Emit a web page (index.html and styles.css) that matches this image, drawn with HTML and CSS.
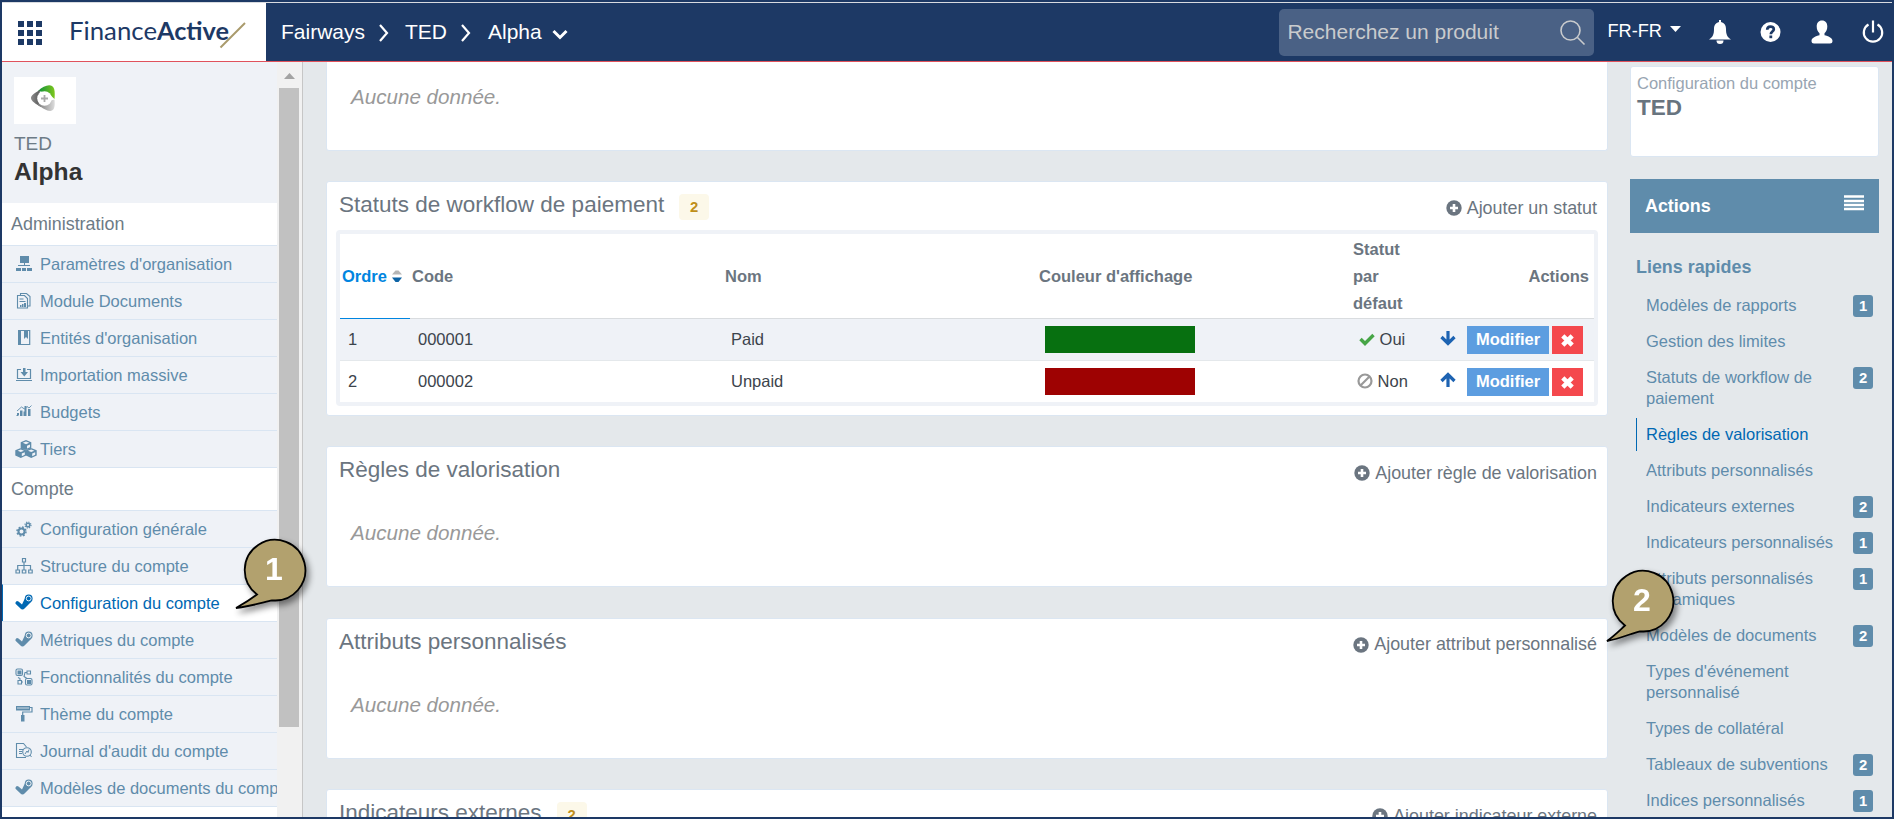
FILE: index.html
```
<!DOCTYPE html>
<html lang="fr">
<head>
    <meta charset="UTF-8">
    <meta name="viewport" content="width=device-width, initial-scale=1.0">
    <title>Configuration du compte</title>
    <link rel="stylesheet" href="styles.css">
</head>
<body>
    <svg class="sprite">
        <symbol id="i-org" viewBox="0 0 18 18"><path d="M5 1h9v7H5zM9 8h1v2h5v1H3v-1h6zM1 13h5v3H1zM7 13h4v3H7zM12 13h5v3h-5z"/></symbol>
        <symbol id="i-doc" viewBox="0 0 18 18"><path d="M2.500 3.500h7l3 3v9.500h-10z M5.500 3V1.500h6l3.500 3V14h-2M4.500 7h4M4.500 9.500h6" fill="none" stroke="currentColor" stroke-width="1.100"/><path d="M5 13h1.500v2H5zM7 12h1.500v3H7zM9 11h2v4H9z"/></symbol>
        <symbol id="i-book" viewBox="0 0 18 18"><path d="M3.700 1.500h11v14h-11z" fill="none" stroke="currentColor" stroke-width="1.200"/><path d="M3 1h3v15H3zM9 2h4v8l-2-2-2 2z"/></symbol>
        <symbol id="i-import" viewBox="0 0 18 18"><path d="M6 3.500H2.500v9h13v-9H12M1 14.500h16" fill="none" stroke="currentColor" stroke-width="1.200"/><path d="M8 2h2.500v4H13l-3.700 4.500L5.500 6H8z"/></symbol>
        <symbol id="i-chart" viewBox="0 0 18 18"><path d="M2 10h2v2H2zM5 7.500h2.500V13H5zM8.500 8.500H11V13H8.500zM9.500 3h2v10h-2zM13 6h2.500v7H13zM1.500 12h2v1h-2z"/><path d="M2 8l4.500-4 3 2 2.500-2.500 2 1.500L16.500 2.500" fill="none" stroke="currentColor" stroke-width=".9"/></symbol>
        <symbol id="i-cubes" viewBox="0 0 22 18"><path d="M11 0l5.300 2.300v5.700L11 10 5.700 8V2.300zM5.800 8l5.300 2.200V15.500l-5.300 2.500L.3 15.500v-5.300zM16.200 8l5.500 2.200v5.300L16.200 18 11 15.500v-5.300z"/><path d="M11 1.500l3.300 1.300L11 4.200 7.700 2.800zM12 5.800l3-1.300v2.700l-3 1.200zM5.800 9.500l3.200 1.300-3.200 1.300-3.200-1.300zM6.800 13.500l3-1.300v2.600l-3 1.400zM16.200 9.500l3.200 1.300-3.200 1.300-3.200-1.300zM17.200 13.500l3-1.300v2.600l-3 1.400z" fill="#eff2f7"/></symbol>
        <symbol id="i-gears" viewBox="0 0 18 18"><circle cx="6.500" cy="11.500" r="3" fill="none" stroke="currentColor" stroke-width="2"/><circle cx="6.500" cy="11.500" r="4.500" fill="none" stroke="currentColor" stroke-width="1.500" stroke-dasharray="1.770"/><circle cx="13" cy="5" r="1.800" fill="none" stroke="currentColor" stroke-width="1.500"/><circle cx="13" cy="5" r="3" fill="none" stroke="currentColor" stroke-width="1.200" stroke-dasharray="1.180"/></symbol>
        <symbol id="i-tree" viewBox="0 0 18 18"><path d="M7.500 1.500h3v3.500h-3zM9 5v8M2.700 12.500V8.500h12.800v4M1 13h3.500v3H1zM7.300 13h3.500v3H7.300zM13.700 13h3.500v3h-3.500z" fill="none" stroke="currentColor" stroke-width="1.200"/></symbol>
        <symbol id="i-tool" viewBox="0 0 18 18"><path d="M.5 8.500a2 2 0 013-1l3.500 3L10.500 3l5.500 5-6.500 6.500a2.500 2.500 0 01-4 0L.5 9.700z"/><circle cx="13.700" cy="4.500" r="3.900"/><circle cx="13.700" cy="4.500" r="2.400" fill="none" stroke="#fff" stroke-width=".9"/></symbol>
        <symbol id="i-feat" viewBox="0 0 18 18"><rect x="1" y="1" width="6.500" height="6.500" rx="1.500" fill="none" stroke="currentColor" stroke-width="1.100"/><rect x="2.500" y="2.500" width="4" height="4"/><rect x="10.500" y="10.500" width="6.500" height="6.500" rx="1.500" fill="none" stroke="currentColor" stroke-width="1.100"/><rect x="12" y="12" width="4" height="4"/><path d="M12 3h3.500v3H12zM3 12.500h3.500v3.500H3zM12 4.500H10l-1 4 3 2M3 9.500l2 1v2M6.500 14H8" fill="none" stroke="currentColor" stroke-width="1.100"/></symbol>
        <symbol id="i-roller" viewBox="0 0 18 18"><path d="M1 1h14v4.500H1zM6 10h3.500v6.500H6z"/><path d="M15 2.500h2v4.500H7.700v3" fill="none" stroke="currentColor" stroke-width="1.200"/><path d="M2 3h12" stroke="#eff2f7" stroke-width=".8"/></symbol>
        <symbol id="i-audit" viewBox="0 0 18 18"><path d="M11 15.500H1.500v-14H8.500l3 3.500M4 7.500h4M4 9.500h3M4 11.500h3" fill="none" stroke="currentColor" stroke-width="1.100"/><circle cx="12" cy="10" r="4.300" fill="none" stroke="currentColor" stroke-width="1.100"/><path d="M10 12l2-3 1 1.500 1-3M15 13l1.500 2" fill="none" stroke="currentColor"/></symbol>
        <symbol id="i-plus" viewBox="0 0 16 16"><circle cx="8" cy="8" r="7.700"/><path d="M8 4v8M4 8h8" stroke="#fff" stroke-width="2.600"/></symbol>
        <symbol id="i-arrow" viewBox="0 0 16 16"><path d="M8 1v12M1.500 7L8 13.500 14.500 7" fill="none" stroke="currentColor" stroke-width="3.200"/></symbol>
        <symbol id="i-cross" viewBox="0 0 16 16"><path d="M3 3l10 10M13 3L3 13" stroke="currentColor" stroke-width="4.800"/></symbol>
        <symbol id="i-next" viewBox="0 0 10 18"><path d="M1 1l7 8-7 8" fill="none" stroke="currentColor" stroke-width="2.200"/></symbol>
        <symbol id="bubble-one" viewBox="0 0 84 84"><path d="M26 61.500A30.300 30.300 0 1141 67.300C33 69 20 73 5 75 13 70.500 20 66 26 61.500z" fill="#b2a16e" stroke="#000" stroke-width="1.800"/></symbol>
        <symbol id="bubble-two" viewBox="0 0 84 84"><path d="M26 61.500A30.300 30.300 0 1141 67.300C33 69 22 74.500 8 77 15 72 20 67 26 61.500z" fill="#b2a16e" stroke="#000" stroke-width="1.800"/></symbol>
    </svg>

    <div class="frame">
        <header class="topbar">
            <div class="brand">
                <svg class="apps" viewBox="0 0 24 24"><path d="M0 0h6v6H0zM9 0h6v6H9zM18 0h6v6h-6zM0 9h6v6H0zM9 9h6v6H9zM18 9h6v6h-6zM0 18h6v6H0zM9 18h6v6H9zM18 18h6v6h-6z"/></svg>
                <svg class="logo" viewBox="0 0 180 30">
                    <text x="0" y="20" textLength="88" lengthAdjust="spacingAndGlyphs">Finance</text>
                    <text x="88" y="20" class="logo-bold" textLength="72" lengthAdjust="spacingAndGlyphs">Active</text>
                    <path d="M151.500 27.500L176 3" stroke="#a99a6b" stroke-width="2"/>
                </svg>
            </div>
            <div class="crumbs">
                <span class="crumb-first">Fairways</span>
                <svg class="next"><use href="#i-next"/></svg>
                <span class="crumb-second">TED</span>
                <svg class="next"><use href="#i-next"/></svg>
                <span>Alpha</span>
                <svg class="down" viewBox="0 0 16 11"><path d="M1.500 2L8 8.500 14.500 2" fill="none" stroke="#fff" stroke-width="3"/></svg>
            </div>
            <div class="search">
                <span>Recherchez un produit</span>
                <svg viewBox="0 0 26 26"><circle cx="10.500" cy="10.500" r="9.500"/><path d="M17.500 17.500l7 7"/></svg>
            </div>
            <span class="lang">FR-FR</span>
            <svg class="caret" viewBox="0 0 11 6"><path d="M0 0h11L5.500 6z"/></svg>
            <div class="tools">
                <svg viewBox="0 0 24 24"><path d="M11 0h2v2c3.500.8 5 3.500 5 7 0 5 1 8 5 10.500H1C5 17 6 14 6 9c0-3.500 1.500-6.200 5-7z"/><path d="M8.500 20.500h7A3.500 3.500 0 018.500 20.500z"/></svg>
                <svg viewBox="0 0 24 24"><circle cx="11.500" cy="12" r="10"/><path d="M8.200 9.800c0-4.400 6.600-4.100 6.600-.6 0 2.300-3 2.300-3 5" fill="none" stroke="#1d3965" stroke-width="2.700"/><path d="M10.400 15.500h2.800v2.700h-2.800z" fill="#1d3965"/></svg>
                <svg viewBox="0 0 24 24"><path d="M12 .5c3.500 0 5.300 2.500 5.300 6 0 3-1.200 5.500-2.800 6.800v2c3.500.8 8 2.500 8 5.700 0 1.700-1 2.500-2.500 2.500H4c-1.500 0-2.500-.8-2.500-2.500 0-3.200 4.500-4.900 8-5.700v-2C7.900 12 6.700 9.500 6.700 6.500c0-3.500 1.800-6 5.300-6z"/></svg>
                <svg viewBox="0 0 24 24"><path d="M7.500 4.500a9.200 9.200 0 109 0M12 .5v12" fill="none" stroke="#fff" stroke-width="2.200"/></svg>
            </div>
        </header>

        <div class="page">
            <nav class="sidebar">
                <div class="account">
                    <div class="account-logo">
                        <svg viewBox="0 0 26 26">
                            <defs>
                                <linearGradient id="green"><stop offset="0" stop-color="#0c8f3c"/><stop offset="1" stop-color="#7ec71c"/></linearGradient>
                                <linearGradient id="grey"><stop offset="0" stop-color="#8a8a8a"/><stop offset="1" stop-color="#555"/></linearGradient>
                                <linearGradient id="silver"><stop offset="0" stop-color="#777"/><stop offset="1" stop-color="#ddd"/></linearGradient>
                            </defs>
                            <path d="M8 6C13 1 19-1 22 1c3 1.500 3 7 2.500 13L18 8z" fill="url(#green)"/>
                            <path d="M10 5C5 8 1 10 1 13s5 6 10 9l-2-9z" fill="url(#grey)"/>
                            <path d="M7 19c6 5 12 8 15 6.500 3-1 3-7 2.500-11z" fill="url(#silver)"/>
                            <circle cx="14.500" cy="13.500" r="7.300" fill="#fff"/>
                            <path d="M14.500 10v7M11 13.500h7" stroke="#aaa" stroke-width="1.800"/>
                        </svg>
                    </div>
                    <div class="account-group">TED</div>
                    <div class="account-name">Alpha</div>
                </div>
                <div class="nav-title">Administration</div>
                <a class="nav-item"><svg><use href="#i-org"/></svg>Paramètres d'organisation</a>
                <a class="nav-item"><svg><use href="#i-doc"/></svg>Module Documents</a>
                <a class="nav-item"><svg><use href="#i-book"/></svg>Entités d'organisation</a>
                <a class="nav-item"><svg><use href="#i-import"/></svg>Importation massive</a>
                <a class="nav-item"><svg><use href="#i-chart"/></svg>Budgets</a>
                <a class="nav-item"><svg class="wide"><use href="#i-cubes"/></svg>Tiers</a>
                <div class="nav-title nav-title-next">Compte</div>
                <a class="nav-item"><svg><use href="#i-gears"/></svg>Configuration générale</a>
                <a class="nav-item"><svg><use href="#i-tree"/></svg>Structure du compte</a>
                <a class="nav-item active"><svg><use href="#i-tool"/></svg>Configuration du compte</a>
                <a class="nav-item"><svg><use href="#i-tool"/></svg>Métriques du compte</a>
                <a class="nav-item"><svg><use href="#i-feat"/></svg>Fonctionnalités du compte</a>
                <a class="nav-item"><svg><use href="#i-roller"/></svg>Thème du compte</a>
                <a class="nav-item"><svg><use href="#i-audit"/></svg>Journal d'audit du compte</a>
                <a class="nav-item"><svg><use href="#i-tool"/></svg>Modèles de documents du compte</a>
                <div class="nav-title nav-title-next"></div>
            </nav>
            <div class="scrollbar">
                <svg viewBox="0 0 11 6"><path d="M0 6h11L5.500 0z"/></svg>
                <div class="thumb"></div>
            </div>

            <main class="content">
                <section class="card card-cut">
                    <p class="empty">Aucune donnée.</p>
                </section>
                <section class="card card-table">
                    <div class="card-head">
                        <h2>Statuts de workflow de paiement</h2><span class="count">2</span>
                        <a class="add"><svg><use href="#i-plus"/></svg>Ajouter un statut</a>
                    </div>
                    <div class="table-box">
                        <table>
                            <colgroup>
                                <col class="c-order"><col class="c-code"><col class="c-name"><col class="c-color"><col class="c-default"><col>
                            </colgroup>
                            <thead>
                                <tr>
                                    <th class="sorted">Ordre <svg viewBox="0 0 10 13"><path d="M0 4.500L3.500.500h3L10 4.500z" fill="#b5b5b5"/><path d="M0 7.500h10l-3.500 4.500h-3z" fill="#0d63a5"/></svg></th>
                                    <th>Code</th>
                                    <th>Nom</th>
                                    <th>Couleur d'affichage</th>
                                    <th>Statut par défaut</th>
                                    <th class="right">Actions</th>
                                </tr>
                            </thead>
                            <tbody>
                                <tr>
                                    <td>1</td>
                                    <td>000001</td>
                                    <td>Paid</td>
                                    <td><div class="swatch paid"></div></td>
                                    <td><svg class="state" viewBox="0 0 16 14"><path d="M1.500 7l4.500 4.500L14.500 3" fill="none" stroke="#46a546" stroke-width="3.400"/></svg> Oui</td>
                                    <td>
                                        <div class="actions">
                                            <svg class="move"><use href="#i-arrow"/></svg>
                                            <button class="btn edit">Modifier</button>
                                            <button class="btn delete"><svg><use href="#i-cross"/></svg></button>
                                        </div>
                                    </td>
                                </tr>
                                <tr>
                                    <td>2</td>
                                    <td>000002</td>
                                    <td>Unpaid</td>
                                    <td><div class="swatch unpaid"></div></td>
                                    <td class="off"><svg class="state" viewBox="0 0 16 16"><circle cx="8" cy="8" r="6.500" fill="none" stroke="#999" stroke-width="2.200"/><path d="M3.500 12.500l9-9" stroke="#999" stroke-width="2.200"/></svg> Non</td>
                                    <td>
                                        <div class="actions">
                                            <svg class="move up"><use href="#i-arrow"/></svg>
                                            <button class="btn edit">Modifier</button>
                                            <button class="btn delete"><svg><use href="#i-cross"/></svg></button>
                                        </div>
                                    </td>
                                </tr>
                            </tbody>
                        </table>
                    </div>
                </section>
                <section class="card">
                    <div class="card-head">
                        <h2>Règles de valorisation</h2>
                        <a class="add"><svg><use href="#i-plus"/></svg>Ajouter règle de valorisation</a>
                    </div>
                    <p class="empty">Aucune donnée.</p>
                </section>
                <section class="card">
                    <div class="card-head">
                        <h2>Attributs personnalisés</h2>
                        <a class="add"><svg><use href="#i-plus"/></svg>Ajouter attribut personnalisé</a>
                    </div>
                    <p class="empty">Aucune donnée.</p>
                </section>
                <section class="card">
                    <div class="card-head">
                        <h2>Indicateurs externes</h2><span class="count">2</span>
                        <a class="add"><svg><use href="#i-plus"/></svg>Ajouter indicateur externe</a>
                    </div>
                </section>
            </main>

            <aside class="aside">
                <div class="summary">
                    <div class="summary-label">Configuration du compte</div>
                    <div class="summary-name">TED</div>
                </div>
                <div class="actions-bar">
                    Actions
                    <svg viewBox="0 0 20 16"><path d="M0 1.500h20M0 6h20M0 10h20M0 14h20" stroke="#fff" stroke-width="2.400"/></svg>
                </div>
                <h3>Liens rapides</h3>
                <ul class="links">
                    <li><span>Modèles de rapports</span><b>1</b></li>
                    <li><span>Gestion des limites</span></li>
                    <li><span>Statuts de workflow de paiement</span><b>2</b></li>
                    <li class="current"><span>Règles de valorisation</span></li>
                    <li><span>Attributs personnalisés</span></li>
                    <li><span>Indicateurs externes</span><b>2</b></li>
                    <li><span>Indicateurs personnalisés</span><b>1</b></li>
                    <li><span>Attributs personnalisés dynamiques</span><b>1</b></li>
                    <li><span>Modèles de documents</span><b>2</b></li>
                    <li><span>Types d'événement personnalisé</span></li>
                    <li><span>Types de collatéral</span></li>
                    <li><span>Tableaux de subventions</span><b>2</b></li>
                    <li><span>Indices personnalisés</span><b>1</b></li>
                </ul>
            </aside>
        </div>

        <div class="callout step-one"><svg><use href="#bubble-one"/></svg><span>1</span></div>
        <div class="callout step-two"><svg><use href="#bubble-two"/></svg><span>2</span></div>
    </div>
</body>
</html>
```
FILE: styles.css
```
* {
    box-sizing: border-box;
}

body {
    margin: 0;
    font-family: "Liberation Sans", Arial, sans-serif;
    font-size: 16.5px;
    background-color: #e4e8eb;
}

svg {
    display: block;
    flex: none;
    fill: currentColor;
}

.sprite {
    display: none;
}

.frame {
    position: relative;
    display: flex;
    flex-direction: column;
    height: 819px;
    border: 2px solid #1d3965;
    overflow: hidden;
}

/* top bar */
.topbar {
    display: flex;
    align-items: center;
    flex: none;
    height: 60px;
    padding-right: 7px;
    background-color: #1d3965;
    border-top: 1px solid #d8dbe0;
    border-bottom: 1px solid #e0525c;
    color: #fff;
}

.brand {
    display: flex;
    align-items: center;
    gap: 27px;
    width: 264px;
    height: 58px;
    padding-left: 16px;
    background-color: #fff;
    color: #1d3965;
}

.apps {
    width: 24px;
    height: 24px;
    margin-top: 2px;
}

.logo {
    width: 180px;
    height: 30px;
    margin-top: 5px;
    overflow: visible;
    font-family: Lato, sans-serif;
    font-size: 25px;
}

.logo-bold {
    font-weight: bold;
}

.crumbs {
    display: flex;
    align-items: center;
    flex: 1;
    padding-left: 15px;
    font-size: 21px;
}

.crumbs span {
    margin-top: -1px;
}

.crumb-first {
    width: 98px;
}

.crumb-second {
    width: 41px;
    margin-left: 16px;
    margin-right: 15px;
}

.next {
    width: 10px;
    height: 18px;
    margin-top: 2px;
}

.next + span:not(.crumb-second) {
    margin-left: 17px;
}

.down {
    width: 16px;
    height: 11px;
    margin: 4px 0 0 10px;
}

.search {
    display: flex;
    align-items: center;
    justify-content: space-between;
    width: 315px;
    height: 47px;
    margin-top: 1px;
    padding: 0 8px;
    border-radius: 5px;
    background-color: #4a6185;
    color: #c9cbcd;
    font-size: 21px;
}

.search span {
    margin-top: -2px;
}

.search svg {
    width: 26px;
    height: 26px;
    margin-top: 1px;
    fill: none;
    stroke: #c9cbcd;
    stroke-width: 1.6;
}

.lang {
    margin: -1px 0 0 13px;
    font-size: 18.2px;
}

.caret {
    width: 11px;
    height: 6px;
    margin: -6px 0 0 8px;
}

.tools {
    display: flex;
    gap: 27px;
    margin-left: 27px;
}

.tools svg {
    width: 24px;
    height: 24px;
}

/* sidebar */
.page {
    display: flex;
    flex: 1;
    min-height: 0;
}

.sidebar {
    width: 275px;
    overflow: hidden;
    background-color: #eff2f7;
    color: #5f8cab;
}

.account {
    height: 141px;
    padding: 15px 12px 0;
}

.account-logo {
    width: 62px;
    height: 47px;
    padding: 8px 0 0 16px;
    background-color: #fff;
}

.account-logo svg {
    width: 26px;
    height: 26px;
}

.account-group {
    margin-top: 8px;
    color: #6d7b86;
    font-size: 19px;
    line-height: 24px;
}

.account-name {
    margin-top: 1px;
    color: #333;
    font-size: 24.6px;
    font-weight: bold;
    line-height: 30px;
}

.nav-title {
    height: 42px;
    padding-left: 9px;
    background-color: #fff;
    color: #6d7b86;
    font-size: 17.9px;
    line-height: 42px;
}

.nav-title-next {
    height: 43px;
    border-top: 1px solid #d9e5f2;
}

.nav-item {
    display: flex;
    align-items: center;
    height: 37px;
    padding-left: 13px;
    border-top: 1px solid #d9e5f2;
    white-space: nowrap;
}

.nav-item svg {
    width: 18px;
    height: 18px;
    margin-right: 7px;
}

.nav-item svg.wide {
    width: 22px;
    margin-right: 3px;
}

.nav-item.active {
    padding-left: 12px;
    background-color: #fff;
    border-left: 1px solid #0068b3;
    color: #0068b3;
}

.scrollbar {
    width: 26px;
    padding: 11px 3px 0 2px;
    background-color: #f1f1f1;
    border-right: 1px solid #c6c6c6;
}

.scrollbar svg {
    width: 11px;
    height: 6px;
    margin: 0 auto;
    color: #a3a3a3;
}

.thumb {
    height: 639px;
    margin-top: 9px;
    background-color: #c1c1c1;
}

/* content */
.content {
    display: flex;
    flex-direction: column;
    gap: 30.5px;
    width: 1282px;
    margin-left: 23px;
}

.card {
    flex: none;
    height: 141px;
    background-color: #fff;
    border: 1px solid #dbe6f2;
    border-radius: 3px;
}

.card-cut {
    height: 89px;
    margin-bottom: -0.5px;
    border-top: none;
    border-radius: 0 0 3px 3px;
}

.card-table {
    height: 234.6px;
}

.card-head {
    display: flex;
    align-items: center;
    height: 46px;
    padding: 0 10px 0 12px;
    color: #6b7580;
}

h2 {
    margin: 0;
    font-size: 22.5px;
    font-weight: normal;
}

.count {
    width: 30px;
    height: 26px;
    margin: 4px 0 0 15px;
    border-radius: 4px;
    background-color: #fcf8e9;
    color: #bf8f1a;
    font-size: 14.8px;
    font-weight: bold;
    line-height: 26px;
    text-align: center;
}

.add {
    display: flex;
    align-items: center;
    gap: 5px;
    margin-left: auto;
    padding-top: 6px;
    font-size: 17.9px;
}

.add svg {
    width: 16px;
    height: 16px;
}

.empty {
    margin: 28px 0 0 24px;
    color: #999;
    font-size: 20.6px;
    font-style: italic;
    line-height: 24px;
}

.card-cut .empty {
    margin-top: 23px;
}

.table-box {
    width: 1262px;
    margin: 2px 0 0 9px;
    border: 4px solid #eff2f7;
    border-radius: 4px;
}

table {
    width: 100%;
    table-layout: fixed;
    border-spacing: 0;
}

.c-order {
    width: 70px;
}

.c-code {
    width: 313px;
}

.c-name {
    width: 314px;
}

.c-color {
    width: 314px;
}

.c-default {
    width: 72px;
}

th {
    height: 85px;
    padding: 1px 2px 0;
    border-bottom: 1px solid #d9dcdf;
    color: #6b7580;
    line-height: 27px;
    text-align: left;
}

th.right {
    padding-right: 5px;
    text-align: right;
}

th.sorted {
    border-color: #0085e0;
    color: #0085e0;
}

th svg {
    display: inline-block;
    width: 10px;
    height: 13px;
    vertical-align: -1px;
}

td {
    height: 42px;
    padding: 0 0 0 8px;
    color: #3c444c;
    white-space: nowrap;
}

tbody tr:first-child td {
    background-color: #eff2f7;
    border-bottom: 1px solid #e4e8eb;
}

tbody tr:last-child td {
    height: 41px;
}

td.off {
    padding-left: 6px;
}

.swatch {
    width: 150px;
    height: 27px;
}

.paid {
    background-color: #077010;
}

.unpaid {
    background-color: #9e0202;
}

.state {
    display: inline-block;
    width: 16px;
    height: 16px;
    vertical-align: -2px;
}

.actions {
    display: flex;
    align-items: center;
    justify-content: flex-end;
    gap: 3px;
    padding: 1px 11px 0 0;
}

.move {
    width: 16px;
    height: 16px;
    margin: -4px 8px 0 0;
    color: #1d63b2;
}

.up {
    transform: rotate(180deg);
}

.btn {
    display: flex;
    align-items: center;
    justify-content: center;
    height: 28px;
    padding: 0;
    border: none;
    color: #fff;
    font-family: inherit;
    font-size: 16.5px;
    font-weight: bold;
}

.edit {
    width: 82px;
    padding-bottom: 2px;
    background-color: #5c9de0;
}

.delete {
    width: 31px;
    background-color: #f4484d;
}

.delete svg {
    width: 15px;
    height: 15px;
}

/* right column */
.aside {
    width: 249px;
    margin-left: 22px;
    color: #5f8cab;
}

.summary {
    height: 91px;
    margin-top: 4px;
    padding: 6px;
    background-color: #fff;
    border: 1px solid #dbe6f2;
    border-radius: 3px;
}

.summary-label {
    color: #98a5b2;
    line-height: 20px;
}

.summary-name {
    margin-top: 2px;
    color: #68747f;
    font-size: 22.5px;
    font-weight: bold;
    line-height: 26px;
}

.actions-bar {
    display: flex;
    align-items: center;
    justify-content: space-between;
    height: 54px;
    margin-top: 22px;
    padding: 0 15px;
    background-color: #5f8cab;
    color: #fff;
    font-size: 17.9px;
    font-weight: bold;
}

.actions-bar svg {
    width: 20px;
    height: 16px;
    margin-top: -6px;
}

h3 {
    margin: 23px 0 11px 6px;
    font-size: 17.9px;
    line-height: 22px;
}

.links {
    margin: 0;
    padding: 0 6px;
    list-style: none;
}

.links li {
    display: flex;
    justify-content: space-between;
    align-items: flex-start;
    margin-bottom: 3px;
    padding: 6px 0 6px 9px;
    border-left: 1px solid transparent;
    line-height: 21px;
}

.links span {
    width: 195px;
}

.links b {
    width: 20px;
    height: 22px;
    border-radius: 3px;
    background-color: #5f8cab;
    color: #fff;
    font-size: 14.8px;
    line-height: 22px;
    margin-bottom: -1px;
    text-align: center;
}

.links .current {
    border-color: #0068b3;
    color: #0068b3;
}

/* numbered bubbles lying over the page */
.callout {
    position: absolute;
    width: 84px;
    height: 84px;
    color: #fff;
    font-size: 32px;
    font-weight: bold;
    filter: drop-shadow(3px 4px 3px rgba(0, 0, 0, 0.45));
}

.callout svg {
    width: 84px;
    height: 84px;
}

.callout span {
    position: absolute;
    top: 18px;
    left: 34px;
}

.step-one {
    top: 531px;
    left: 229px;
}

.step-two {
    top: 562px;
    left: 1597px;
}
```
